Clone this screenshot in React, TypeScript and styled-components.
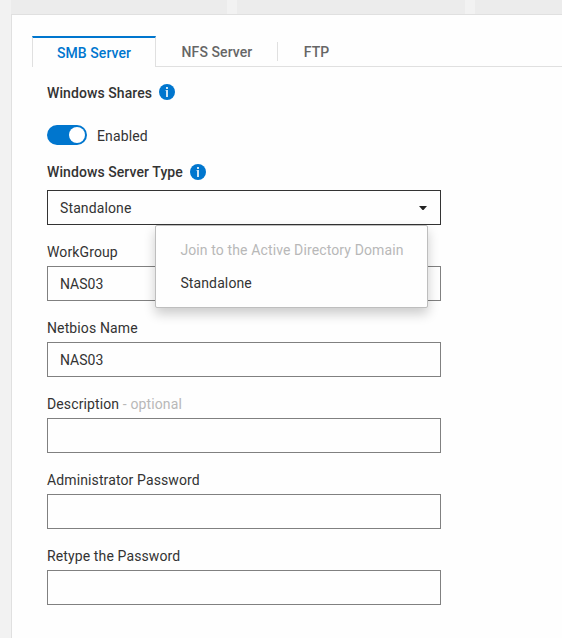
import React from 'react';
import styled, { createGlobalStyle } from 'styled-components';

const GlobalStyle = createGlobalStyle`
  * { box-sizing: border-box; }
  body {
    margin: 0;
    background: #f2f2f2;
    color: #333;
    font: 14px/20px Roboto, sans-serif;
    letter-spacing: 0.12px;
    overflow: hidden;
  }
`;

const Page = styled.div`
  display: flex;
  flex-direction: column;
  height: 638px;
  padding-left: 11px;
`;

const CardStrip = styled.div`
  display: grid;
  grid-template-columns: 216px 228px 87px;
  column-gap: 10px;
  flex: 0 0 14px;
`;

const CardEdge = styled.div`
  background: #ececec;
`;

const Panel = styled.main`
  flex: 1;
  padding-top: 21px;
  background: #fefefe;
  border: solid #e0e0e0;
  border-width: 1px 0 0 1px;
`;

const TabBar = styled.nav`
  display: flex;
  height: 31px;
  padding-left: 20px;
`;

const Tab = styled.button<{ $active?: boolean; $width: number }>`
  width: ${({ $width }) => $width}px;
  padding: ${({ $active }) => ($active ? '0' : '2px 0 0 1px')};
  border: 0 solid #e0e0e0;
  border-width: ${({ $active }) => ($active ? '2px 1px 0' : '0 0 1px')};
  border-top-color: #0076ce;
  background: none;
  color: ${({ $active }) => ($active ? '#0076ce' : '#666')};
  font: 500 14px/20px Roboto, sans-serif;
  letter-spacing: 0.08px;
`;

const TabDivider = styled.div`
  width: 1px;
  border-bottom: 1px solid #e0e0e0;
  background: linear-gradient(#e0e0e0, #e0e0e0) 0 6px / 1px 19px no-repeat;
`;

const TabRule = styled.div`
  flex: 1;
  border-bottom: 1px solid #e0e0e0;
`;

const Form = styled.form`
  width: 429px;
  padding: 15px 0 0 35px;
`;

const Heading = styled.div<{ $textOffset?: number }>`
  display: flex;
  align-items: center;
  gap: 7px;
  height: 20px;
  font-weight: 500;
  letter-spacing: 0.08px;
  span { padding-top: ${({ $textOffset = 0 }) => $textOffset}px; }
  svg { display: block; }
`;

const ToggleRow = styled.label`
  display: flex;
  align-items: center;
  gap: 10px;
  height: 20px;
  margin: 23px 0 17px;
`;

const ToggleText = styled.span`
  padding-top: 2px;
`;

const ToggleTrack = styled.span`
  display: flex;
  justify-content: flex-end;
  width: 40px;
  height: 20px;
  padding: 2px;
  border-radius: 10px;
  background: #0076ce;
`;

const ToggleKnob = styled.span`
  width: 16px;
  height: 16px;
  border-radius: 50%;
  background: #fff;
`;

const SelectWrap = styled.div`
  position: relative;
  margin-top: 8px;
`;

const Select = styled.div`
  display: flex;
  align-items: center;
  justify-content: space-between;
  height: 35px;
  padding: 0 13px 0 12px;
  border: 1px solid #333;
`;

const Menu = styled.ul`
  position: absolute;
  top: 35px;
  left: 108px;
  width: 273px;
  height: 83px;
  margin: 0;
  padding: 8px 0;
  list-style: none;
  background: #fefefe;
  border: 1px solid #bebebe;
  border-radius: 2px;
  box-shadow: 0 6px 12px rgba(0, 0, 0, 0.2);
`;

const MenuItem = styled.li<{ $disabled?: boolean }>`
  height: 33px;
  padding-left: 24.4px;
  line-height: 33px;
  color: ${({ $disabled }) => ($disabled ? '#b8b8b8' : '#333')};
`;

const FieldGroup = styled.label`
  display: block;
  padding-top: 17px;
`;

const FieldLabel = styled.span`
  display: block;
  height: 24px;
`;

const Optional = styled.span`
  color: #b8b8b8;
`;

const Input = styled.input`
  display: block;
  width: 100%;
  height: 35px;
  padding: 0 12px;
  border: 1px solid #808080;
  border-radius: 0;
  background: #fefefe;
  color: #333;
  font: inherit;
  letter-spacing: 0;
`;

const InfoIcon = () => (
  <svg width="16" height="16" viewBox="0 0 16 16">
    <circle cx="8" cy="8" r="8" fill="#0076ce" />
    <path d="M7 3h2v2H7zM6.6 6H9v7H7V7h-.4z" fill="#fefefe" opacity=".82" />
  </svg>
);

const Caret = () => (
  <svg width="8" height="4" viewBox="0 0 8 4">
    <path d="M0 0h8L4.5 4h-1z" fill="#222" />
  </svg>
);

const fields = [
  { label: 'WorkGroup', value: 'NAS03' },
  { label: 'Netbios Name', value: 'NAS03' },
  { label: 'Description', value: '', optional: true },
  { label: 'Administrator Password', value: '', type: 'password' },
  { label: 'Retype the Password', value: '', type: 'password' },
];

export default function App() {
  return (
    <>
      <GlobalStyle />
      <Page>
        <CardStrip>
          <CardEdge />
          <CardEdge />
          <CardEdge />
        </CardStrip>
        <Panel>
          <TabBar>
            <Tab $active $width={124}>SMB Server</Tab>
            <Tab $width={121}>NFS Server</Tab>
            <TabDivider />
            <Tab $width={76}>FTP</Tab>
            <TabRule />
          </TabBar>
          <Form>
            <Heading $textOffset={2}><span>Windows Shares</span><InfoIcon /></Heading>
            <ToggleRow>
              <ToggleTrack><ToggleKnob /></ToggleTrack>
              <ToggleText>Enabled</ToggleText>
            </ToggleRow>
            <Heading><span>Windows Server Type</span><InfoIcon /></Heading>
            <SelectWrap>
              <Select>Standalone <Caret /></Select>
              <Menu>
                <MenuItem $disabled>Join to the Active Directory Domain</MenuItem>
                <MenuItem>Standalone</MenuItem>
              </Menu>
            </SelectWrap>
            {fields.map(({ label, value, type, optional }) => (
              <FieldGroup key={label}>
                <FieldLabel>
                  {label}
                  {optional && <Optional> - optional</Optional>}
                </FieldLabel>
                <Input type={type ?? 'text'} defaultValue={value} />
              </FieldGroup>
            ))}
          </Form>
        </Panel>
      </Page>
    </>
  );
}
